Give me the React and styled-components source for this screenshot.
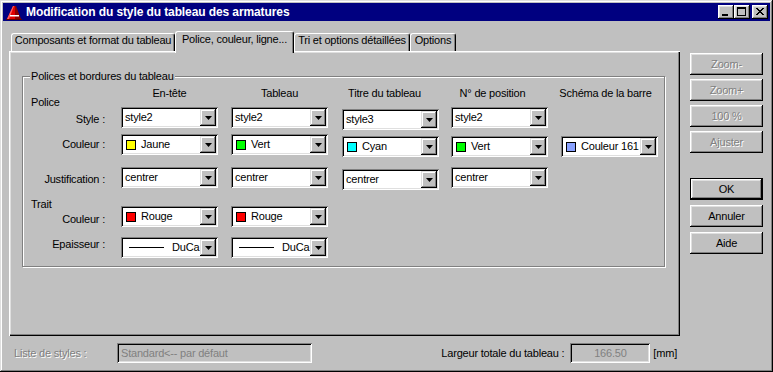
import React from 'react';
import styled, { createGlobalStyle, css } from 'styled-components';

const Global = createGlobalStyle`
  html, body { margin: 0; padding: 0; background: #c0c0c0; }
  body { font-family: "Liberation Sans", Arial, sans-serif; font-size: 11px; }
  * { box-sizing: border-box; }
`;

const raised = css`
  box-shadow: inset -1px -1px #000, inset 1px 1px #fff, inset -2px -2px #808080, inset 2px 2px #dfdfdf;
`;
const sunken = css`
  box-shadow: inset 1px 1px #808080, inset -1px -1px #fff, inset 2px 2px #000, inset -2px -2px #dfdfdf;
`;

const Window = styled.div`
  width: 773px;
  height: 372px;
  padding: 3px;
  background: #c0c0c0;
  box-shadow: inset -1px -1px #000, inset 1px 1px #dfdfdf, inset -2px -2px #808080, inset 2px 2px #fff;
  display: flex;
  flex-direction: column;
  color: #000;
  font-size: 11px;
  line-height: 13px;
  letter-spacing: -0.2px;
`;

const TitleBar = styled.div`
  height: 18px;
  background: #000080;
  display: flex;
  align-items: center;
  padding: 0 2px 0 3px;
`;

const TitleText = styled.div`
  flex: 1;
  margin-left: 4px;
  color: #fff;
  font-weight: bold;
  font-size: 12px;
  letter-spacing: -0.1px;
  white-space: nowrap;
`;

const CapButton = styled.div`
  width: 16px;
  height: 14px;
  background: #c0c0c0;
  ${raised};
  display: flex;
  align-items: center;
  justify-content: center;
  margin-left: ${p => p.$gap || 0}px;
`;

const Main = styled.div`
  flex: 1;
  display: flex;
  padding: 10px 7px 0 6px;
`;

const LeftCol = styled.div`
  width: 671px;
  display: flex;
  flex-direction: column;
`;

const TabRow = styled.div`
  display: flex;
  align-items: flex-end;
  height: 20px;
  margin-left: 2px;
  position: relative;
  z-index: 1;
`;

const Tab = styled.div`
  width: ${p => p.$w}px;
  height: 18px;
  text-align: center;
  white-space: nowrap;
  background: #c0c0c0;
  border-top: 1px solid #fff;
  border-left: 1px solid #fff;
  border-right: 1px solid #000;
  border-radius: 3px 3px 0 0;
  box-shadow: inset -1px 0 #808080;
  ${p => p.$active && css`
    height: 22px;
    margin-bottom: -2px;
    padding-top: 1px;
  `}
`;

const Panel = styled.div`
  height: 285px;
  background: #c0c0c0;
  box-shadow: inset 1px 1px #fff, inset -1px -1px #000, inset -2px -2px #808080, inset 2px 2px #dfdfdf;
  padding: 25px 0 0 13px;
`;

const GroupBox = styled.div`
  position: relative;
  width: 643px;
  border: 1px solid #808080;
  box-shadow: inset 1px 1px #fff, 1px 1px #fff;
  padding: 10px 0 8px 0;
`;

const Legend = styled.div`
  position: absolute;
  top: -7px;
  left: 7px;
  padding: 0 1px;
  background: #c0c0c0;
  white-space: nowrap;
`;

const Row = styled.div`
  display: grid;
  grid-template-columns: 98px 110px 111px 109px 110px 97px;
  grid-template-rows: ${p => p.$h || 21}px;
  align-items: start;
  margin-top: ${p => p.$mt || 0}px;
`;

const RowLabel = styled.div`
  text-align: right;
  padding-right: 16px;
  padding-top: ${p => p.$pt || 0}px;
  white-space: nowrap;
`;

const SectionLabel = styled.div`
  padding-left: 8px;
  padding-top: ${p => p.$pt || 0}px;
  white-space: nowrap;
`;

const ColHeader = styled.div`
  width: 97px;
  text-align: center;
  white-space: nowrap;
  margin-left: ${p => p.$dx || 0}px;
`;

const Combo = styled.div`
  width: 97px;
  height: 21px;
  padding: 2px;
  background: #fff;
  ${sunken};
  display: flex;
  margin-top: ${p => p.$dy || 0}px;
`;

const ComboValue = styled.div`
  flex: 1;
  min-width: 0;
  white-space: nowrap;
  display: flex;
  align-items: center;
  gap: ${p => p.$gap ?? 5}px;
  padding-left: ${p => p.$pl ?? 2}px;
  line-height: 17px;
`;

const Swatch = styled.span`
  flex: none;
  width: 10px;
  height: 10px;
  border: 1px solid #000;
  background: ${p => p.$color};
`;

const LineSample = styled.span`
  flex: none;
  width: 35px;
  height: 1px;
  background: #000;
`;

const ComboButton = styled.div`
  flex: none;
  width: 16px;
  height: 17px;
  background: #c0c0c0;
  box-shadow: inset -1px -1px #000, inset 1px 1px #dfdfdf, inset -2px -2px #808080, inset 2px 2px #fff;
  display: flex;
  align-items: center;
  justify-content: center;
`;

const RightCol = styled.div`
  width: 73px;
  margin-left: 10px;
  padding-top: 22px;
  display: flex;
  flex-direction: column;
`;

const ButtonGroup = styled.div`
  display: flex;
  flex-direction: column;
  gap: ${p => p.$gap}px;
  margin-top: ${p => p.$mt || 0}px;
`;

const Button = styled.div`
  height: 22px;
  background: #c0c0c0;
  ${raised};
  display: flex;
  align-items: center;
  justify-content: center;
  white-space: nowrap;
  ${p => p.$disabled && css`
    color: #808080;
    text-shadow: 1px 1px #fff;
  `}
  ${p => p.$default && css`
    box-shadow: inset 0 0 0 1px #000, inset -2px -2px #000, inset 2px 2px #fff, inset -3px -3px #808080, inset 3px 3px #dfdfdf;
  `}
`;

const BottomRow = styled.div`
  display: flex;
  align-items: center;
  height: 20px;
  margin-top: 7px;
  padding: 0 3px 0 5px;
  white-space: nowrap;
`;

const DisabledLabel = styled.span`
  width: 103px;
  color: #808080;
  text-shadow: 1px 1px #fff;
`;

const Field = styled.div`
  width: ${p => p.$w}px;
  height: 20px;
  padding: 0 4px;
  line-height: 20px;
  background: #c0c0c0;
  color: #808080;
  ${sunken};
  text-align: ${p => p.$align || 'left'};
`;

const FieldLabel = styled.span`
  margin-left: auto;
  margin-right: 6px;
`;

const Unit = styled.span`
  margin-left: 3px;
`;

const Arrow = () => (
  <svg width="7" height="4" viewBox="0 0 7 4"><polygon points="0,0 7,0 3.5,4" fill="#000" /></svg>
);

const AppIcon = () => (
  <svg width="16" height="16" viewBox="0 0 16 16">
    <polygon points="1,15 7,2 9,2 9,15" fill="#e00000" />
    <polygon points="9,2 10,2 15,15 9,15" fill="#8a0000" />
    <polygon points="1,15 7,2 8,2 3,15" fill="#ff6060" />
    <rect x="4" y="11" width="9" height="1.5" fill="#fff" />
    <rect x="0" y="15" width="16" height="1" fill="#600000" />
  </svg>
);

const Select = ({ value, color, line, dy }) => (
  <Combo $dy={dy}>
    {line ? (
      <ComboValue $pl={6} $gap={8}><LineSample />DuCa</ComboValue>
    ) : color ? (
      <ComboValue $pl={3}><Swatch $color={color} />{value}</ComboValue>
    ) : (
      <ComboValue>{value}</ComboValue>
    )}
    <ComboButton><Arrow /></ComboButton>
  </Combo>
);

export default function App() {
  return (
    <>
      <Global />
      <Window>
        <TitleBar>
          <AppIcon />
          <TitleText>Modification du style du tableau des armatures</TitleText>
          <CapButton>
            <svg width="16" height="14" viewBox="0 0 16 14"><rect x="4" y="9" width="6" height="2" fill="#000" /></svg>
          </CapButton>
          <CapButton>
            <svg width="16" height="14" viewBox="0 0 16 14">
              <rect x="3.5" y="2.5" width="8" height="8" fill="none" stroke="#000" />
              <rect x="3" y="2" width="9" height="2" fill="#000" />
            </svg>
          </CapButton>
          <CapButton $gap={2}>
            <svg width="16" height="14" viewBox="0 0 16 14">
              <path d="M4 3 L11 10 M5 3 L12 10 M11 3 L4 10 M12 3 L5 10" stroke="#000" strokeWidth="1" fill="none" />
            </svg>
          </CapButton>
        </TitleBar>

        <Main>
          <LeftCol>
            <TabRow>
              <Tab $w={164}>Composants et format du tableau</Tab>
              <Tab $w={119} $active>Police, couleur, ligne...</Tab>
              <Tab $w={116}>Tri et options détaillées</Tab>
              <Tab $w={46}>Options</Tab>
            </TabRow>
            <Panel>
              <GroupBox>
                <Legend>Polices et bordures du tableau</Legend>
                <Row $h={20}>
                  <SectionLabel $pt={9}>Police</SectionLabel>
                  <ColHeader>En-tête</ColHeader>
                  <ColHeader>Tableau</ColHeader>
                  <ColHeader $dx={-6}>Titre du tableau</ColHeader>
                  <ColHeader $dx={-7}>N° de position</ColHeader>
                  <ColHeader $dx={-4}>Schéma de la barre</ColHeader>
                </Row>
                <Row>
                  <RowLabel $pt={6}>Style :</RowLabel>
                  <Select value="style2" />
                  <Select value="style2" />
                  <Select value="style3" dy={2} />
                  <Select value="style2" />
                </Row>
                <Row $mt={6}>
                  <RowLabel $pt={4}>Couleur :</RowLabel>
                  <Select value="Jaune" color="#ffff00" />
                  <Select value="Vert" color="#00ff00" />
                  <Select value="Cyan" color="#00ffff" dy={2} />
                  <Select value="Vert" color="#00ff00" dy={2} />
                  <Select value="Couleur 161" color="#8aa2ff" dy={2} />
                </Row>
                <Row $mt={12}>
                  <RowLabel $pt={6}>Justification :</RowLabel>
                  <Select value="centrer" />
                  <Select value="centrer" />
                  <Select value="centrer" dy={2} />
                  <Select value="centrer" />
                </Row>
                <Row $h={13} $mt={10}>
                  <SectionLabel>Trait</SectionLabel>
                </Row>
                <Row $mt={-5}>
                  <RowLabel $pt={7}>Couleur :</RowLabel>
                  <Select value="Rouge" color="#ff0000" />
                  <Select value="Rouge" color="#ff0000" />
                </Row>
                <Row $mt={10}>
                  <RowLabel $pt={1}>Epaisseur :</RowLabel>
                  <Select line />
                  <Select line />
                </Row>
              </GroupBox>
            </Panel>
            <BottomRow>
              <DisabledLabel>Liste de styles :</DisabledLabel>
              <Field $w={195}>Standard&lt;-- par défaut</Field>
              <FieldLabel>Largeur totale du tableau :</FieldLabel>
              <Field $w={80} $align="center">166.50</Field>
              <Unit>[mm]</Unit>
            </BottomRow>
          </LeftCol>

          <RightCol>
            <ButtonGroup $gap={4}>
              <Button $disabled>Zoom-</Button>
              <Button $disabled>Zoom+</Button>
              <Button $disabled>100 %</Button>
              <Button $disabled>Ajuster</Button>
            </ButtonGroup>
            <ButtonGroup $gap={5} $mt={25}>
              <Button $default>OK</Button>
              <Button>Annuler</Button>
              <Button>Aide</Button>
            </ButtonGroup>
          </RightCol>
        </Main>
      </Window>
    </>
  );
}
